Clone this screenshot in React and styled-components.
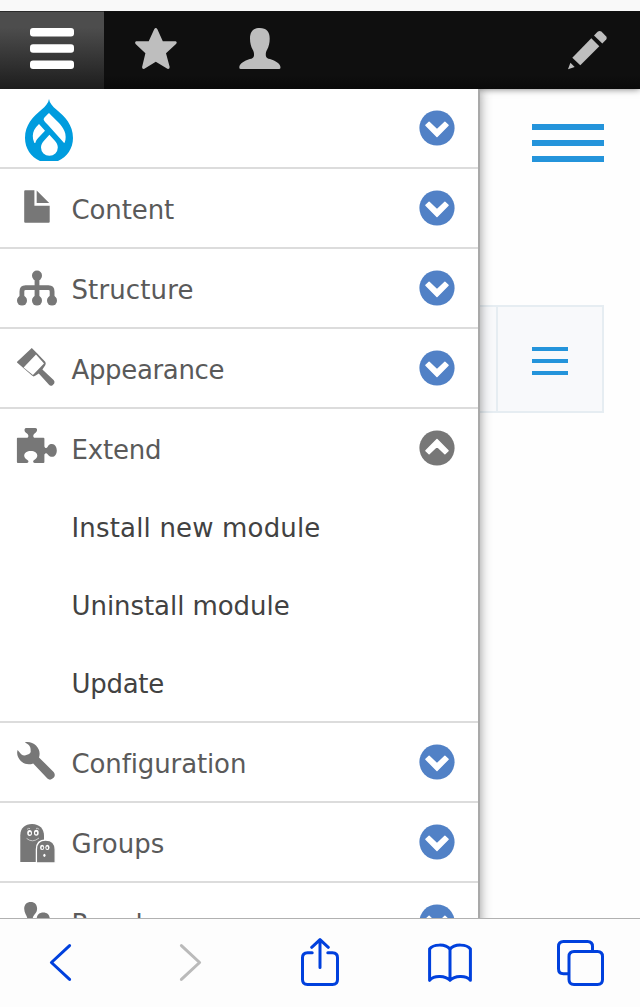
import React from 'react'
import { useState } from 'react';
import styled, { createGlobalStyle } from 'styled-components';

const GlobalStyle = createGlobalStyle`
  body{
    margin: 0;
    background: #fefefe;
    font-family: Verdana, 'DejaVu Sans', sans-serif;
  }

  *{
    box-sizing: border-box;
  }

  svg{
    display: block;
    flex-shrink: 0;
  }

  button{
    border: 0;
    padding: 0;
    background: none;
    font: inherit;
    color: inherit;
  }
`;

const Screen = styled.div`
  display: flex;
  flex-direction: column;
  width: 640px;
  height: 1007px;
  overflow: hidden;
`;

const StatusStrip = styled.div`
  flex: 0 0 11px;
  background: #f9f9f9;
`;

const Toolbar = styled.nav`
  position: relative;
  z-index: 1;
  display: flex;
  flex: 0 0 78px;
  background: linear-gradient(#0f0f0f 82%, #0a0a0a);
  box-shadow: 0 0 7px rgba(0, 0, 0, 0.55);
  clip-path: inset(0 0 -20px 0);
`;

const ToolbarTab = styled.button`
  display: flex;
  justify-content: center;
  align-items: center;
  width: 104px;
  padding-bottom: 4px;
  border-top: ${(props) => (props.$active ? '1px solid #2b2b2b' : '0')};
  padding-top: ${(props) => (props.$active ? '0' : '1px')};
  margin-left: ${(props) => (props.$end ? 'auto' : '0')};
  background: ${(props) => (props.$active ? 'linear-gradient(#4d4d4d 20%, #1d1d1d)' : 'none')};
`;

const Main = styled.main`
  display: flex;
  flex: 1;
  min-height: 0;
  overflow: hidden;
`;

const Tray = styled.aside`
  position: relative;
  z-index: 2;
  flex: 0 0 480px;
  align-self: flex-start;
  min-height: calc(100% + 20px);
  background: #fff;
  border-right: 2px solid #a9a9a9;
  box-shadow: 0 0 11px rgba(0, 0, 0, 0.42);
`;

const MenuItem = styled.div`
  border-bottom: 2px solid #dcdcdc;
`;

const MenuRow = styled.div`
  display: flex;
  align-items: center;
  height: 78px;
  padding: 0 23px 0 16px;
`;

const Label = styled.span`
  flex: 1;
  margin-left: 13.5px;
  padding-top: 4px;
  font-size: 26px;
  line-height: 30px;
  white-space: nowrap;
  color: #5a5a5a;
  letter-spacing: ${(props) => props.$spacing || 0}px;
`;

const LogoSlot = styled.div`
  flex: 1;
  padding: 2px 0 0 8px;
`;

const SubItem = styled.div`
  height: 78px;
  padding: 26px 0 0 71.5px;
  font-size: 26px;
  line-height: 30px;
  white-space: nowrap;
  color: #424242;
  letter-spacing: ${(props) => props.$spacing || 0}px;
`;

const Page = styled.section`
  display: flex;
  flex-direction: column;
  flex: 1;
  padding: 35px 36px 0 0;
  background: #fefefe;
`;

const Lines = styled.div`
  display: flex;
  flex-direction: column;
  gap: ${(props) => props.$gap}px;
  width: ${(props) => props.$width}px;

  span{
    height: ${(props) => props.$thick}px;
    background: #2494db;
  }
`;

const PageHead = styled.div`
  display: flex;
  justify-content: flex-end;
  height: 181px;
`;

const SearchBlock = styled.div`
  display: flex;
  height: 108px;
  background: #f8f9fb;
  border: 2px solid #e6edf2;
  border-left: 0;
`;

const SearchField = styled.div`
  width: 18px;
  border-right: 2px solid #e6edf2;
`;

const SearchMenu = styled.div`
  display: flex;
  justify-content: center;
  align-items: center;
  flex: 1;
  padding-top: 4px;
`;

const BrowserBar = styled.footer`
  display: flex;
  justify-content: space-between;
  align-items: center;
  flex: 0 0 89px;
  padding: 0 35px;
  background: #fdfdfd;
  border-top: 1px solid #b1b1b1;
`;

const BarsIcon = () => (
  <svg width="44" height="42" viewBox="0 0 44 42" fill="#fff">
    <rect width="44" height="8.4" y="0" rx="3" />
    <rect width="44" height="8.4" y="16.3" rx="3" />
    <rect width="44" height="8.4" y="32.5" rx="3" />
  </svg>
)

const StarIcon = () => (
  <svg width="42" height="42" viewBox="0 0 42 42" fill="#bebebe">
    <path d="M19.2 1.2Q20.8-1.2 22.4 1.2L27.8 13.3H40.6Q42.6 14 41 16L31 25.3L34.7 39Q34.6 41.4 32.4 40.8L20.8 33.8L9.4 40.8Q7 41.4 7.1 39L10.4 25.3L.6 16Q-.6 14 1.2 13.3H13.7Z" />
  </svg>
)

const PersonIcon = () => (
  <svg width="42" height="42" viewBox="0 0 42 42" fill="#bebebe">
    <path d="M20.8 0C27.5 0 30.7 3.8 30.7 10.5C30.7 15 29.8 18.6 28.2 21.6C27 23.8 26.7 25 26.8 27.4C27 29.6 28.8 30.4 31 31.1C36.5 32.7 41.5 36 41.5 39.4Q41.5 41 40 41H1.8Q.3 41 .3 39.4C.3 36 5.3 32.7 10.8 31.1C13 30.4 14.8 29.6 15 27.4C15.1 25 14.8 23.8 13.6 21.6C12 18.6 11 15 11 10.5C11 3.8 14.2 0 20.8 0Z" />
  </svg>
)

const PencilIcon = () => (
  <svg width="42" height="42" viewBox="0 0 42 42" fill="#bebebe">
    <path d="M1 41.3L3.4 34.8L7.7 39Z" />
    <path d="M5.3 29.7L24.3 10.3L32.3 18.3L13.3 37.3Z" />
    <path d="M27 7.5L30.6 3.8Q32.4 2.2 34.4 3.5L39.2 8.4Q40.4 10 39.2 11.6L35.3 15.4Z" />
  </svg>
)

const DrupalLogo = () => (
  <svg width="50" height="63" viewBox="0 0 50 63">
    <path fill="#009cde" d="M25 1C25.6 5 28.4 8.4 32.6 11.8C41 18.8 49 27 49 40C49 50.5 43 59 34 63H16C7 59 1 50.5 1 40C1 27 9 18.8 17.4 11.8C21.6 8.4 24.4 5 25 1Z" />
    <path fill="#fff" d="M25 15C21 18.8 19.3 20.3 19.8 22.1C20.3 23.6 22 25 24 27L39 43.8C39.8 44.9 40.2 45.4 40.8 44.3C42 41.5 42 36.5 40.4 33C37.5 26 31.4 22 25 15Z" />
    <path fill="#fff" d="M15 26L21 32.7L14.6 39.6C12.5 42 11.9 43 11.4 44.8Q10.8 45.6 10.1 44.2C8.2 40 8.5 35.4 10.2 32Q12 28.8 15 26Z" />
    <path fill="#fff" d="M25.4 36.8L30.6 42.5C32.8 45 33.8 46.8 33.8 49.6A8.4 8.2 0 0 1 17 49.6C17 46.8 18 45 20.2 42.5Z" />
  </svg>
)

const ContentIcon = () => (
  <svg width="42" height="42" viewBox="0 0 42 42" fill="#777">
    <path d="M9.2 3.2H18.4V18.7H33.7V34.8Q33.7 35.8 32.7 35.8H9.2Q8.2 35.8 8.2 34.8V4.2Q8.2 3.2 9.2 3.2Z" />
    <path d="M20.7 3.6L33.2 15.9H20.7Z" />
  </svg>
)

const StructureIcon = () => (
  <svg width="42" height="42" viewBox="0 0 42 42" fill="#777">
    <path d="M21 8V33M5.9 33V24.5Q5.9 20.7 9.6 20.7H32.4Q36.1 20.7 36.1 24.5V33" fill="none" stroke="#777" strokeWidth="4.8" />
    <circle cx="21" cy="8.6" r="5" />
    <circle cx="6" cy="33.6" r="5" />
    <circle cx="21" cy="33.6" r="5" />
    <circle cx="36" cy="33.6" r="5" />
  </svg>
)

const AppearanceIcon = () => (
  <svg width="42" height="42" viewBox="0 0 42 42" fill="#777">
    <path fillRule="evenodd" d="M15.8 .9L20.8 6L29.2 14.8Q30.2 16 29.4 18L26.4 22.4L37.6 33Q39.2 34.8 38.2 36.6L36.6 38.2Q34.6 39.4 33 37.8L22.8 26.4L19.6 28.6Q17.6 30.2 16 28.6L1 15.6Q.6 15 1.4 14.4ZM20 7.6L7.6 20.4L16.9 28L28 16.4Z" />
  </svg>
)

const ExtendIcon = () => (
  <svg width="42" height="42" viewBox="0 0 42 42" fill="#777">
    <path d="M1.6 10.8H11.4C13 9.8 12.6 7.4 11 6.4C8.8 5.2 8.2 3.6 8.6 2.2Q9 1 10.2 1H19.2Q20.6 1 21 2.2C21.2 3.8 20.6 5.2 18.6 6.4C17 7.4 16.8 9.8 18.2 10.8H27.4Q28.4 10.8 28.4 11.8V19.4C29.4 21.6 30.8 21.2 31.8 19.4C32.8 17.6 34.2 17 36 17C39 17 40.8 20 40.8 23.4C40.8 27 39 29.8 36 29.8C34.2 29.8 33 29 31.8 27.4C30.6 26 29.4 25.8 28.4 27.6V35Q28.4 36 27.4 36H18.6C16.8 35.6 16.6 34 18.2 33C20.2 31.8 21.3 30.4 21.3 28.6C21.3 25.6 18.6 23.9 14.8 23.9C11 23.9 8.2 25.6 8.2 28.6C8.2 30.4 9.4 31.8 11.4 33C13 34 12.8 35.6 11 36H1.9Q.9 36 .9 35V11.6Q.9 10.8 1.6 10.8Z" />
  </svg>
)

const ConfigIcon = () => (
  <svg width="42" height="42" viewBox="0 0 42 42" fill="#777">
    <path d="M8.8 1.3C13 .4 17 1.6 20 4.6C23.4 8 24.4 12.4 23 16.4L37.6 31Q40 34 37.6 36.8Q34.4 40 31.4 37.6L17.2 22.4C13 24 8.2 23.4 4.8 20C1.6 16.8 .4 12.6 1.6 9L5.2 13.2Q7.8 15.2 11 13.8C13.6 13.2 15.2 11.6 14.6 9.4C14.8 6.6 13.8 5 12.2 3.6Z" />
  </svg>
)

const GroupsIcon = () => (
  <svg width="42" height="42" viewBox="0 0 42 42" fill="#777">
    <path d="M4.3 41V14.5C4.3 7 9 3 16.1 3C23.5 3 28 8 28 14.5V41Z" />
    <path d="M20.4 42V28.5C20.4 22 24 19 29.6 19C35.5 19 39.2 22 39.2 28.5V42Z" stroke="#fff" strokeWidth="1.3" />
    <g fill="#fff">
      <ellipse cx="13.6" cy="12" rx="2.4" ry="3" />
      <ellipse cx="20.3" cy="11.8" rx="2.4" ry="3" />
      <ellipse cx="26.1" cy="26.4" rx="2.1" ry="2.6" />
      <ellipse cx="31.4" cy="26.4" rx="2.1" ry="2.6" />
      <ellipse cx="28.4" cy="34.3" rx="1.1" ry="1.6" />
    </g>
    <g fill="#777">
      <ellipse cx="13.9" cy="12.3" rx="1" ry="1.4" />
      <ellipse cx="20.1" cy="12.1" rx="1" ry="1.4" />
      <ellipse cx="26.4" cy="26.7" rx=".9" ry="1.2" />
      <ellipse cx="31.2" cy="26.7" rx=".9" ry="1.2" />
    </g>
    <path d="M10.6 17.4Q16.5 22.4 23 17M11 8.4Q12.4 6.8 14 7.6M20 7.4Q22 6.8 23.2 8.4" fill="none" stroke="#ddd" strokeWidth=".8" />
  </svg>
)

const PeopleIcon = () => (
  <svg width="42" height="42" viewBox="0 0 42 42" fill="#777">
    <path d="M14.7 1C18.7 1 21.1 3.6 21.1 7.8C21.1 13 16.7 13.4 16.7 18C16.7 22 20 24 22 26V37H1C1 26 11.4 25 11.4 18C11.4 15 8.2 12.5 8.2 7.8C8.2 3.6 10.8 1 14.7 1Z" />
    <path d="M27.3 11.4C31.4 11.4 33.8 14 33.8 18C33.8 23 30 24 30 28C30 32 38 33 39 37H22C22 32 24 31 24 28C24 24 20.7 23 20.7 18C20.7 14 23.2 11.4 27.3 11.4Z" />
  </svg>
)

const ToggleIcon = ({ open }) => (
  <svg width="36" height="36" viewBox="0 0 36 36">
    <circle cx="18" cy="18" r="17.6" fill={open ? '#777' : '#5181c6'} />
    <path transform={open ? 'rotate(180 18 18)' : undefined} d="M6.9 15.2L10.1 12.3L18 19.8L25.9 12.3L29.1 15.2L18 26.6Z" fill="#fff" stroke="#fff" strokeWidth="1.4" strokeLinejoin="round" />
  </svg>
)

// browser controls share the same stroke
const ControlIcon = styled.svg`
  width: 50px;
  height: 50px;
  fill: none;
  stroke: ${(props) => (props.$disabled ? '#bababa' : '#0040dd')};
  stroke-width: 3;
  stroke-linecap: round;
  stroke-linejoin: round;
`;

const controls = [
  { name: 'Back', d: 'M34.6 7.6L16.4 24.5L34.6 41.4' },
  { name: 'Forward', d: 'M16.4 7.6L34.6 24.5L16.4 41.4', disabled: true },
  { name: 'Share', d: 'M17.2 14.8H12.5Q7.5 14.8 7.5 19.8V41.5Q7.5 46.5 12.5 46.5H37.5Q42.5 46.5 42.5 41.5V19.8Q42.5 14.8 37.5 14.8H32.8M25 29.5V2M16.7 9.3L25 1.6L33.3 9.3' },
  { name: 'Bookmarks', d: 'M25 10V42.3C20.5 37.8 9.5 36.6 4.6 42.3V11C8 6.3 20.5 5.2 25 11.5C29.5 5.2 42 6.3 45.4 11V42.3C40.5 36.6 29.5 37.8 25 42.3' },
  { name: 'Tabs', d: 'M14 35.7H8.5Q3.5 35.7 3.5 30.7V8.5Q3.5 3.5 8.5 3.5H32.5Q37.5 3.5 37.5 8.5V13.2M19 13.5H42.5Q47.5 13.5 47.5 18.5V41.5Q47.5 46.5 42.5 46.5H19Q14 46.5 14 41.5V18.5Q14 13.5 19 13.5Z' },
]

const menu = [
  { name: 'Content', icon: ContentIcon, spacing: -0.1 },
  { name: 'Structure', icon: StructureIcon, spacing: 0.12 },
  { name: 'Appearance', icon: AppearanceIcon, spacing: -0.35 },
  {
    name: 'Extend',
    icon: ExtendIcon,
    spacing: -0.2,
    children: [
      { name: 'Install new module', spacing: 0.17 },
      { name: 'Uninstall module', spacing: -0.06 },
      { name: 'Update', spacing: -0.3 },
    ],
  },
  { name: 'Configuration', icon: ConfigIcon, spacing: -0.12 },
  { name: 'Groups', icon: GroupsIcon },
  { name: 'People', icon: PeopleIcon, spacing: 0.2 },
]

const Burger = (props) => (
  <Lines {...props}>
    <span />
    <span />
    <span />
  </Lines>
)

const App = () => {
  const [opened, setOpened] = useState('Extend')

  const handleToggle = (name) => {
    setOpened(opened === name ? '' : name)
  }

  return (
    <Screen>
      <GlobalStyle />
      <StatusStrip />
      <Toolbar>
        <ToolbarTab $active aria-label='Manage'><BarsIcon /></ToolbarTab>
        <ToolbarTab aria-label='Shortcuts'><StarIcon /></ToolbarTab>
        <ToolbarTab aria-label='User'><PersonIcon /></ToolbarTab>
        <ToolbarTab $end aria-label='Edit'><PencilIcon /></ToolbarTab>
      </Toolbar>
      <Main>
        <Tray>
          <MenuItem>
            <MenuRow>
              <LogoSlot><DrupalLogo /></LogoSlot>
              <button aria-label='Tools'><ToggleIcon /></button>
            </MenuRow>
          </MenuItem>
          {menu.map(({ name, icon: Icon, spacing, children }) => (
            <MenuItem key={name}>
              <MenuRow>
                <Icon />
                <Label $spacing={spacing}>{name}</Label>
                <button aria-label={name} onClick={() => handleToggle(name)}>
                  <ToggleIcon open={opened === name} />
                </button>
              </MenuRow>
              {opened === name && children && children.map((child) => (
                <SubItem key={child.name} $spacing={child.spacing}>{child.name}</SubItem>
              ))}
            </MenuItem>
          ))}
        </Tray>
        <Page>
          <PageHead>
            <Burger $width={72} $thick={6} $gap={10} />
          </PageHead>
          <SearchBlock>
            <SearchField />
            <SearchMenu>
              <Burger $width={36} $thick={4} $gap={8} />
            </SearchMenu>
          </SearchBlock>
        </Page>
      </Main>
      <BrowserBar>
        {controls.map((item) => (
          <ControlIcon key={item.name} viewBox='0 0 50 50' $disabled={item.disabled}>
            <path d={item.d} />
          </ControlIcon>
        ))}
      </BrowserBar>
    </Screen>
  )
}

export default App
